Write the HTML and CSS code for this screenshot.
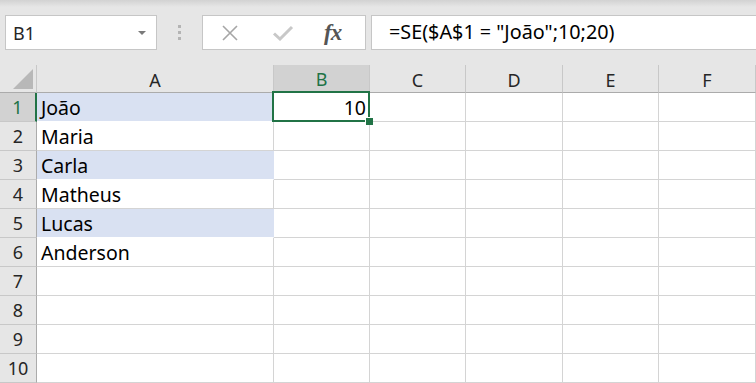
FILE: index.html
```html
<!DOCTYPE html>
<html>
<head>
<meta charset="utf-8">
<title>Planilha</title>
<link rel="stylesheet" href="styles.css">
</head>
<body>

<div class="toolbar">
	<div class="namebox">
		<span class="ref">B1</span>
		<span class="caret"></span>
	</div>
	<div class="grip"><i></i><i></i><i></i></div>
	<div class="fnbox">
		<svg class="icon" width="20" height="16" viewBox="0 0 20 16">
			<path d="M3 1 L17 15 M17 1 L3 15" stroke="#a6a6a6" stroke-width="1.6" fill="none"/>
		</svg>
		<svg class="icon" width="22" height="16" viewBox="0 0 22 16">
			<path d="M2 8.5 L8 14 L20 2" stroke="#c8c8c8" stroke-width="3" fill="none"/>
		</svg>
		<span class="fx">fx</span>
	</div>
	<div class="formula">=SE($A$1 = "João";10;20)</div>
</div>

<div class="sheet">
	<div class="corner"><span class="tri"></span></div>
	<div class="colhead">A</div>
	<div class="colhead active">B</div>
	<div class="colhead">C</div>
	<div class="colhead">D</div>
	<div class="colhead">E</div>
	<div class="colhead">F</div>

	<div class="rowhead active">1</div>
	<div class="cell blue">João</div>
	<div class="cell num selected">10<span class="handle"></span></div>
	<div class="cell"></div><div class="cell"></div><div class="cell"></div><div class="cell"></div>

	<div class="rowhead">2</div>
	<div class="cell">Maria</div>
	<div class="cell"></div><div class="cell"></div><div class="cell"></div><div class="cell"></div><div class="cell"></div>

	<div class="rowhead">3</div>
	<div class="cell blue">Carla</div>
	<div class="cell"></div><div class="cell"></div><div class="cell"></div><div class="cell"></div><div class="cell"></div>

	<div class="rowhead">4</div>
	<div class="cell">Matheus</div>
	<div class="cell"></div><div class="cell"></div><div class="cell"></div><div class="cell"></div><div class="cell"></div>

	<div class="rowhead">5</div>
	<div class="cell blue">Lucas</div>
	<div class="cell"></div><div class="cell"></div><div class="cell"></div><div class="cell"></div><div class="cell"></div>

	<div class="rowhead">6</div>
	<div class="cell">Anderson</div>
	<div class="cell"></div><div class="cell"></div><div class="cell"></div><div class="cell"></div><div class="cell"></div>

	<div class="rowhead">7</div>
	<div class="cell"></div><div class="cell"></div><div class="cell"></div><div class="cell"></div><div class="cell"></div><div class="cell"></div>

	<div class="rowhead">8</div>
	<div class="cell"></div><div class="cell"></div><div class="cell"></div><div class="cell"></div><div class="cell"></div><div class="cell"></div>

	<div class="rowhead">9</div>
	<div class="cell"></div><div class="cell"></div><div class="cell"></div><div class="cell"></div><div class="cell"></div><div class="cell"></div>

	<div class="rowhead">10</div>
	<div class="cell"></div><div class="cell"></div><div class="cell"></div><div class="cell"></div><div class="cell"></div><div class="cell"></div>
</div>

</body>
</html>
```

FILE: styles.css
```css
html, body {
	margin: 0;
	padding: 0;
	overflow: hidden;
}

body {
	width: 756px;
	height: 383px;
	background: #e6e6e6;
	font-family: "Noto Sans", sans-serif;
	color: #000;
}

/* formula bar */
.toolbar {
	height: 65px;
	box-sizing: border-box;
	padding-top: 15px;
	display: flex;
	align-items: flex-start;
	background: linear-gradient(#d2d2d2, #e6e6e6 7px);
}

.namebox {
	margin-left: 5px;
	width: 152px;
	height: 35px;
	box-sizing: border-box;
	border: 1px solid #c6c6c6;
	background: #fff;
	display: flex;
	align-items: center;
	justify-content: space-between;
	padding: 0 10px 0 7px;
}

.ref {
	font-size: 18px;
	color: #262626;
}

.caret {
	width: 0;
	height: 0;
	border-left: 4px solid transparent;
	border-right: 4px solid transparent;
	border-top: 4px solid #7a7a7a;
}

.grip {
	width: 45px;
	height: 35px;
	display: flex;
	flex-direction: column;
	align-items: center;
	justify-content: center;
	gap: 3px;
}

.grip i {
	width: 3px;
	height: 3px;
	background: #b4b4b4;
}

.fnbox {
	width: 164px;
	height: 35px;
	box-sizing: border-box;
	border: 1px solid #c6c6c6;
	background: #fff;
	display: flex;
	align-items: center;
	padding-left: 17px;
	gap: 34px;
}

.fnbox .icon {
	display: block;
}

.fnbox .icon + .icon {
	margin-left: -2px;
}

.fx {
	font-family: "Liberation Serif", serif;
	font-style: italic;
	font-weight: bold;
	font-size: 23px;
	color: #555;
	margin-left: -4px;
	letter-spacing: -1px;
}

.formula {
	margin-left: 5px;
	flex: 1;
	height: 35px;
	box-sizing: border-box;
	border: 1px solid #c6c6c6;
	border-right: none;
	background: #fff;
	padding-left: 17px;
	font-size: 19.8px;
	line-height: 32px;
	color: #000;
}

/* worksheet */
.sheet {
	display: grid;
	grid-template-columns: 37px 237px 96px 96px 97px 96px 1fr;
	grid-template-rows: 28px repeat(10, 29px);
	background: #fff;
}

.corner {
	background: #e6e6e6;
	border-right: 1px solid #c8c8c8;
	border-bottom: 1px solid #ababab;
	display: flex;
	align-items: flex-end;
	justify-content: flex-end;
	padding: 0 3px 3px 0;
}

.tri {
	width: 0;
	height: 0;
	border-left: 20px solid transparent;
	border-bottom: 20px solid #b8b8b8;
}

.colhead {
	background: #e6e6e6;
	border-right: 1px solid #c8c8c8;
	border-bottom: 1px solid #ababab;
	font-size: 18px;
	text-align: center;
	line-height: 30px;
	color: #262626;
}

.colhead.active {
	background: #d2d2d2;
	color: #217346;
	border-bottom: 2px solid #217346;
	line-height: 29px;
}

.rowhead {
	background: #e6e6e6;
	border-right: 1px solid #ababab;
	border-bottom: 1px solid #c8c8c8;
	font-size: 18px;
	text-align: center;
	line-height: 29px;
	color: #262626;
}

.rowhead.active {
	background: #d2d2d2;
	color: #217346;
	border-right: 2px solid #217346;
}

.cell {
	border-right: 1px solid #d4d4d4;
	border-bottom: 1px solid #d4d4d4;
	font-size: 19.5px;
	line-height: 29px;
	padding-left: 4px;
	white-space: nowrap;
}

.cell.blue {
	background: #d9e1f2;
	border-right-color: #d9e1f2;
	border-bottom-color: #fff;
}

.cell.num {
	text-align: right;
	padding: 0 3px 0 0;
}

.selected {
	position: relative;
}

.selected::after {
	content: "";
	position: absolute;
	left: -2px;
	top: -2px;
	right: -1px;
	bottom: -1px;
	border: 2px solid #217346;
}

.handle {
	position: absolute;
	right: -4px;
	bottom: -4px;
	width: 7px;
	height: 7px;
	background: #217346;
	border-left: 1px solid #fff;
	border-top: 1px solid #fff;
	z-index: 2;
}
```
